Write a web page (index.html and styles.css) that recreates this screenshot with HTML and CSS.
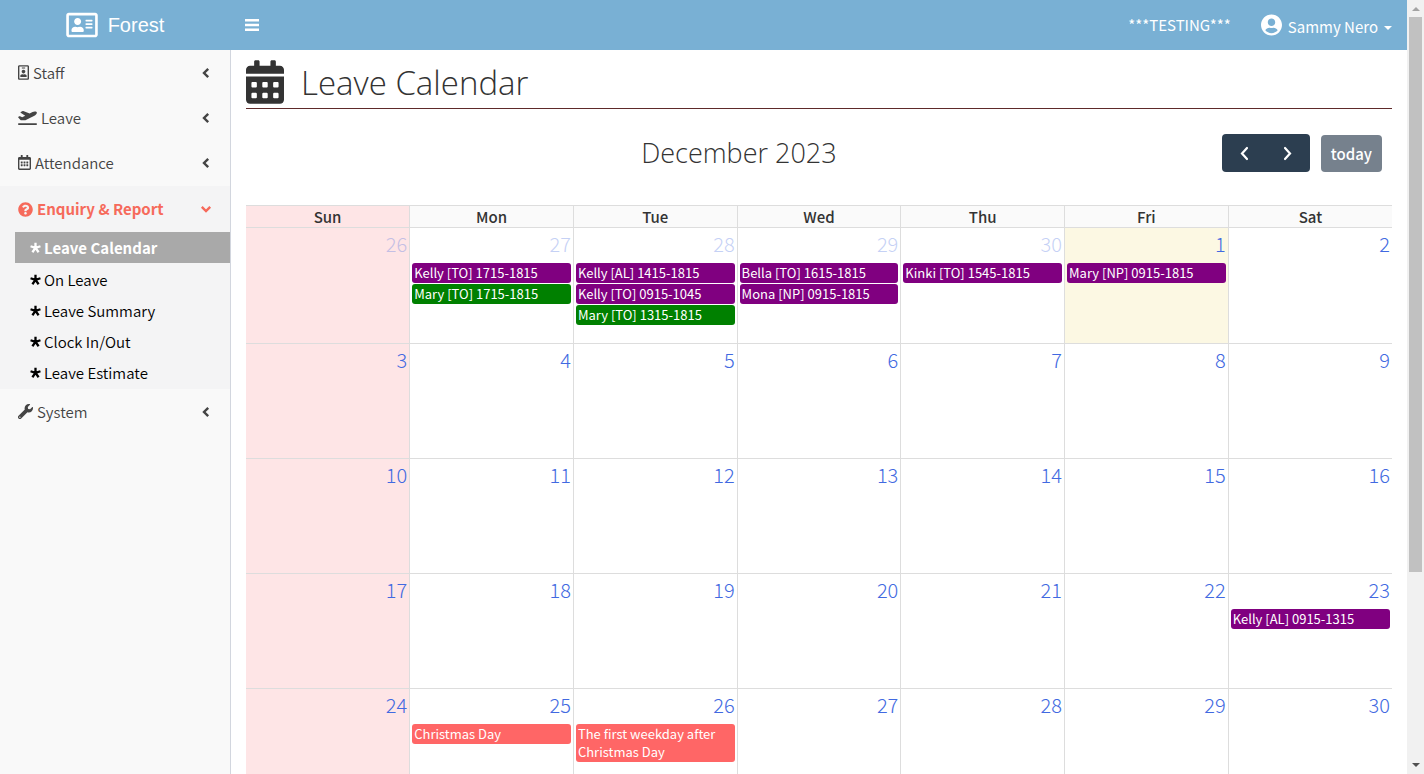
FILE: index.html
```html
<!DOCTYPE html>
<html lang="en">
<head>
    <meta charset="UTF-8">
    <meta name="viewport" content="width=device-width, initial-scale=1.0">
    <title>Leave Calendar</title>
    <link rel="stylesheet" href="styles.css">
</head>
<body>
    <!-- Shared icons -->
    <svg class="icon-defs" aria-hidden="true">
        <symbol id="angle-left" viewBox="0 0 8 12"><path d="M6.200 1.800L2 6l4.200 4.200" fill="none" stroke="currentColor" stroke-width="2.400"/></symbol>
        <symbol id="star" viewBox="0 0 12 12"><path d="M6 6.400V.8M6 6.400L.6 4.600M6 6.400l5.400-1.800M6 6.400l-3.400 4.800M6 6.400l3.400 4.800" fill="none" stroke="currentColor" stroke-width="2.500"/></symbol>
    </svg>

    <div class="page">
        <div class="app">
            <header class="navbar">
                <a href="#" class="brand">
                    <svg class="brand-icon" viewBox="0 0 576 512"><path fill="currentColor" d="M528 32H48C21.500 32 0 53.500 0 80v352c0 26.500 21.500 48 48 48h480c26.500 0 48-21.500 48-48V80c0-26.500-21.500-48-48-48zm0 400H48V80h480v352zM208 256c35.300 0 64-28.700 64-64s-28.700-64-64-64-64 28.700-64 64 28.700 64 64 64zm-89.600 128h179.200c12.400 0 22.400-8.600 22.400-19.200v-19.200c0-31.800-30.100-57.600-67.200-57.600-10.800 0-18.700 8-44.800 8-26.900 0-33.400-8-44.800-8-37.100 0-67.200 25.800-67.200 57.600v19.200c0 10.600 10 19.200 22.400 19.200zM360 320h112c4.400 0 8-3.600 8-8v-16c0-4.400-3.600-8-8-8H360c-4.400 0-8 3.600-8 8v16c0 4.400 3.600 8 8 8zm0-64h112c4.400 0 8-3.600 8-8v-16c0-4.400-3.600-8-8-8H360c-4.400 0-8 3.600-8 8v16c0 4.400 3.600 8 8 8zm0-64h112c4.400 0 8-3.600 8-8v-16c0-4.400-3.600-8-8-8H360c-4.400 0-8 3.600-8 8v16c0 4.400 3.600 8 8 8z"/></svg>
                    <span>Forest</span>
                </a>
                <button type="button" class="sidebar-toggle" aria-label="Toggle navigation">
                    <svg viewBox="0 0 14 12"><path fill="currentColor" d="M0 0h14v2.400H0zM0 4.800h14v2.400H0zM0 9.600h14v2.400H0z"/></svg>
                </button>
                <span class="env-label">***TESTING***</span>
                <button type="button" class="user-menu">
                    <svg class="user-icon" viewBox="0 0 496 512"><path fill="currentColor" d="M248 8C111 8 0 119 0 256s111 248 248 248 248-111 248-248S385 8 248 8zm0 96c48.600 0 88 39.400 88 88s-39.400 88-88 88-88-39.400-88-88 39.400-88 88-88zm0 344c-58.700 0-111.300-26.600-146.500-68.200 18.800-35.400 55.600-59.800 98.500-59.800 2.400 0 4.800.4 7.100 1.100 13 4.200 26.600 6.900 40.900 6.900 14.300 0 28-2.700 40.900-6.900 2.300-.7 4.700-1.100 7.100-1.100 42.900 0 79.700 24.400 98.500 59.800C359.300 421.400 306.700 448 248 448z"/></svg>
                    <span class="user-name">Sammy Nero</span>
                    <span class="caret"></span>
                </button>
            </header>

            <div class="body">
                <nav class="sidebar">
                    <ul class="menu">
                        <li>
                            <a href="#" class="menu-link">
                                <svg class="icon-badge" viewBox="0 0 384 512"><path fill="currentColor" d="M336 0H48C21.500 0 0 21.500 0 48v416c0 26.500 21.500 48 48 48h288c26.500 0 48-21.500 48-48V48c0-26.500-21.500-48-48-48zm0 464H48V48h288v416zM144 112h96c8.800 0 16-7.200 16-16s-7.200-16-16-16h-96c-8.800 0-16 7.200-16 16s7.200 16 16 16zm48 176c35.300 0 64-28.700 64-64s-28.700-64-64-64-64 28.700-64 64 28.700 64 64 64zm-89.600 128h179.200c12.400 0 22.400-8.600 22.400-19.200v-19.200c0-31.800-30.100-57.600-67.200-57.600-10.800 0-18.700 8-44.800 8-26.900 0-33.400-8-44.800-8-37.100 0-67.200 25.800-67.200 57.600v19.200c0 10.600 10 19.200 22.400 19.200z"/></svg>
                                <span>Staff</span>
                                <svg class="arrow"><use href="#angle-left"/></svg>
                            </a>
                        </li>
                        <li>
                            <a href="#" class="menu-link">
                                <svg class="icon-plane" viewBox="0 0 640 512"><path fill="currentColor" d="M624 448H16c-8.840 0-16 7.160-16 16v32c0 8.840 7.160 16 16 16h608c8.840 0 16-7.160 16-16v-32c0-8.840-7.160-16-16-16zM80.550 341.270c6.280 6.840 15.100 10.720 24.330 10.710l130.540-.18a65.620 65.620 0 0 0 29.640-7.120l290.960-147.650c26.740-13.570 50.710-32.940 67.020-58.310 18.310-28.480 20.300-49.090 13.070-63.650-7.210-14.570-24.740-25.270-58.250-27.450-29.850-1.940-59.540 5.920-86.280 19.480l-98.510 49.990-218.700-82.060a17.800 17.800 0 0 0-18-1.110L90.620 67.290c-10.670 5.410-13.250 19.650-5.170 28.530l156.220 98.100-103.210 52.380-72.350-36.470a17.800 17.800 0 0 0-16.070.02L9.910 230.220c-10.440 5.300-13.190 19.120-5.570 28.080l76.210 82.970z"/></svg>
                                <span>Leave</span>
                                <svg class="arrow"><use href="#angle-left"/></svg>
                            </a>
                        </li>
                        <li>
                            <a href="#" class="menu-link">
                                <svg class="icon-calendar" viewBox="0 0 448 512"><path fill="currentColor" d="M148 288h-40c-6.600 0-12-5.400-12-12v-40c0-6.600 5.400-12 12-12h40c6.600 0 12 5.400 12 12v40c0 6.600-5.400 12-12 12zm108-12v-40c0-6.600-5.400-12-12-12h-40c-6.600 0-12 5.400-12 12v40c0 6.600 5.400 12 12 12h40c6.600 0 12-5.400 12-12zm96 0v-40c0-6.600-5.400-12-12-12h-40c-6.600 0-12 5.400-12 12v40c0 6.600 5.400 12 12 12h40c6.600 0 12-5.400 12-12zm-96 96v-40c0-6.600-5.400-12-12-12h-40c-6.600 0-12 5.400-12 12v40c0 6.600 5.400 12 12 12h40c6.600 0 12-5.400 12-12zm-96 0v-40c0-6.600-5.400-12-12-12h-40c-6.600 0-12 5.400-12 12v40c0 6.600 5.400 12 12 12h40c6.600 0 12-5.400 12-12zm192 0v-40c0-6.600-5.400-12-12-12h-40c-6.600 0-12 5.400-12 12v40c0 6.600 5.400 12 12 12h40c6.600 0 12-5.400 12-12zm96-260v352c0 26.500-21.500 48-48 48H48c-26.500 0-48-21.500-48-48V112c0-26.500 21.500-48 48-48h48V12c0-6.600 5.400-12 12-12h40c6.600 0 12 5.400 12 12v52h128V12c0-6.600 5.400-12 12-12h40c6.600 0 12 5.400 12 12v52h48c26.500 0 48 21.500 48 48zm-48 346V160H48v298c0 3.300 2.700 6 6 6h340c3.300 0 6-2.700 6-6z"/></svg>
                                <span>Attendance</span>
                                <svg class="arrow"><use href="#angle-left"/></svg>
                            </a>
                        </li>
                        <li class="open">
                            <a href="#" class="menu-link">
                                <svg class="icon-question" viewBox="0 0 512 512"><path fill="currentColor" d="M504 256c0 137-111 248-248 248S8 393 8 256C8 119 119 8 256 8s248 111 248 248zM262.700 90c-54.500 0-89.300 23-116.600 63.800-3.500 5.300-2.400 12.400 2.700 16.200l34.700 26.300c5.200 4 12.600 3 16.700-2.100 17.900-22.700 30.100-35.800 57.300-35.800 20.400 0 45.700 13.100 45.700 33 0 15-12.400 22.700-32.500 34C247.100 238.500 216 254.900 216 296v4c0 6.600 5.400 12 12 12h56c6.600 0 12-5.400 12-12v-1.300c0-28.500 83.200-29.700 83.200-106.700 0-58-60.200-102-116.500-102zM256 338c-25.400 0-46 20.600-46 46 0 25.400 20.600 46 46 46s46-20.600 46-46c0-25.400-20.600-46-46-46z"/></svg>
                                <span>Enquiry &amp; Report</span>
                                <svg class="arrow arrow-down"><use href="#angle-left"/></svg>
                            </a>
                            <ul class="submenu">
                                <li><a href="#" class="submenu-link active"><svg class="icon-star"><use href="#star"/></svg>Leave Calendar</a></li>
                                <li><a href="#" class="submenu-link"><svg class="icon-star"><use href="#star"/></svg>On Leave</a></li>
                                <li><a href="#" class="submenu-link"><svg class="icon-star"><use href="#star"/></svg>Leave Summary</a></li>
                                <li><a href="#" class="submenu-link"><svg class="icon-star"><use href="#star"/></svg>Clock In/Out</a></li>
                                <li><a href="#" class="submenu-link"><svg class="icon-star"><use href="#star"/></svg>Leave Estimate</a></li>
                            </ul>
                        </li>
                        <li>
                            <a href="#" class="menu-link">
                                <svg class="icon-wrench" viewBox="0 0 512 512"><path fill="currentColor" d="M507.730 109.100c-2.240-9.030-13.540-12.090-20.120-5.510l-74.360 74.360-67.880-11.310-11.310-67.880 74.360-74.360c6.620-6.620 3.430-17.900-5.660-20.160-47.380-11.740-99.550.91-136.580 37.930-39.640 39.640-50.550 97.100-34.050 147.200L18.740 402.760c-24.990 24.990-24.990 65.510 0 90.500 24.990 24.990 65.510 24.990 90.500 0l213.210-213.210c50.120 16.710 107.470 5.680 147.370-34.220 37.070-37.070 49.700-89.320 37.910-136.730zM64 472c-13.250 0-24-10.750-24-24 0-13.260 10.750-24 24-24s24 10.740 24 24c0 13.250-10.750 24-24 24z"/></svg>
                                <span>System</span>
                                <svg class="arrow"><use href="#angle-left"/></svg>
                            </a>
                        </li>
                    </ul>
                </nav>

                <main class="content">
                    <div class="page-header">
                        <svg class="page-icon" viewBox="0 0 448 512"><path fill="currentColor" fill-rule="evenodd" d="M0 464c0 26.500 21.500 48 48 48h352c26.500 0 48-21.500 48-48V192H0v272zM76 256h40q12 0 12 12v40q0 12-12 12H76q-12 0-12-12v-40q0-12 12-12zm128 0h40q12 0 12 12v40q0 12-12 12h-40q-12 0-12-12v-40q0-12 12-12zm128 0h40q12 0 12 12v40q0 12-12 12h-40q-12 0-12-12v-40q0-12 12-12zM76 384h40q12 0 12 12v40q0 12-12 12H76q-12 0-12-12v-40q0-12 12-12zm128 0h40q12 0 12 12v40q0 12-12 12h-40q-12 0-12-12v-40q0-12 12-12zm128 0h40q12 0 12 12v40q0 12-12 12h-40q-12 0-12-12v-40q0-12 12-12zM400 64h-48V16c0-8.800-7.200-16-16-16h-32c-8.800 0-16 7.200-16 16v48H160V16c0-8.800-7.200-16-16-16h-32c-8.800 0-16 7.200-16 16v48H48C21.500 64 0 85.500 0 112v48h448v-48c0-26.500-21.500-48-48-48z"/></svg>
                        <h1>Leave Calendar</h1>
                    </div>

                    <div class="toolbar">
                        <div></div>
                        <h2>December 2023</h2>
                        <div class="toolbar-buttons">
                            <div class="btn-group">
                                <button type="button" class="btn-nav" aria-label="Previous month"><svg viewBox="0 0 10 16"><path d="M8 3L3 8.500 8 14" fill="none" stroke="currentColor" stroke-width="2.200" stroke-linecap="round"/></svg></button>
                                <button type="button" class="btn-nav" aria-label="Next month"><svg viewBox="0 0 10 16"><path d="M2 3l5 5.500L2 14" fill="none" stroke="currentColor" stroke-width="2.200" stroke-linecap="round"/></svg></button>
                            </div>
                            <button type="button" class="btn-today">today</button>
                        </div>
                    </div>

                    <table class="calendar">
                        <thead>
                            <tr>
                                <th>Sun</th>
                                <th>Mon</th>
                                <th>Tue</th>
                                <th>Wed</th>
                                <th>Thu</th>
                                <th>Fri</th>
                                <th>Sat</th>
                            </tr>
                        </thead>
                        <tbody>
                            <tr>
                                <td class="other"><a href="#" class="day">26</a></td>
                                <td class="other">
                                    <a href="#" class="day">27</a>
                                    <a href="#" class="event purple">Kelly [TO] 1715-1815</a>
                                    <a href="#" class="event green">Mary [TO] 1715-1815</a>
                                </td>
                                <td class="other">
                                    <a href="#" class="day">28</a>
                                    <a href="#" class="event purple">Kelly [AL] 1415-1815</a>
                                    <a href="#" class="event purple">Kelly [TO] 0915-1045</a>
                                    <a href="#" class="event green">Mary [TO] 1315-1815</a>
                                </td>
                                <td class="other">
                                    <a href="#" class="day">29</a>
                                    <a href="#" class="event purple">Bella [TO] 1615-1815</a>
                                    <a href="#" class="event purple">Mona [NP] 0915-1815</a>
                                </td>
                                <td class="other">
                                    <a href="#" class="day">30</a>
                                    <a href="#" class="event purple">Kinki [TO] 1545-1815</a>
                                </td>
                                <td class="today">
                                    <a href="#" class="day">1</a>
                                    <a href="#" class="event purple">Mary [NP] 0915-1815</a>
                                </td>
                                <td><a href="#" class="day">2</a></td>
                            </tr>
                            <tr>
                                <td><a href="#" class="day">3</a></td>
                                <td><a href="#" class="day">4</a></td>
                                <td><a href="#" class="day">5</a></td>
                                <td><a href="#" class="day">6</a></td>
                                <td><a href="#" class="day">7</a></td>
                                <td><a href="#" class="day">8</a></td>
                                <td><a href="#" class="day">9</a></td>
                            </tr>
                            <tr>
                                <td><a href="#" class="day">10</a></td>
                                <td><a href="#" class="day">11</a></td>
                                <td><a href="#" class="day">12</a></td>
                                <td><a href="#" class="day">13</a></td>
                                <td><a href="#" class="day">14</a></td>
                                <td><a href="#" class="day">15</a></td>
                                <td><a href="#" class="day">16</a></td>
                            </tr>
                            <tr>
                                <td><a href="#" class="day">17</a></td>
                                <td><a href="#" class="day">18</a></td>
                                <td><a href="#" class="day">19</a></td>
                                <td><a href="#" class="day">20</a></td>
                                <td><a href="#" class="day">21</a></td>
                                <td><a href="#" class="day">22</a></td>
                                <td>
                                    <a href="#" class="day">23</a>
                                    <a href="#" class="event purple">Kelly [AL] 0915-1315</a>
                                </td>
                            </tr>
                            <tr>
                                <td><a href="#" class="day">24</a></td>
                                <td>
                                    <a href="#" class="day">25</a>
                                    <a href="#" class="event holiday">Christmas Day</a>
                                </td>
                                <td>
                                    <a href="#" class="day">26</a>
                                    <a href="#" class="event holiday">The first weekday after Christmas Day</a>
                                </td>
                                <td><a href="#" class="day">27</a></td>
                                <td><a href="#" class="day">28</a></td>
                                <td><a href="#" class="day">29</a></td>
                                <td><a href="#" class="day">30</a></td>
                            </tr>
                        </tbody>
                    </table>
                </main>
            </div>
        </div>

        <!-- Page scrollbar -->
        <div class="scrollbar" aria-hidden="true">
            <span class="scroll-up"></span>
            <div class="scroll-track"><div class="scroll-thumb"></div></div>
            <span class="scroll-down"></span>
        </div>
    </div>
</body>
</html>
```

FILE: styles.css
```css
* {
    box-sizing: border-box;
}
body {
    margin: 0;
    font-family: "Noto Sans CJK TC", "Noto Sans", sans-serif;
    font-size: 15px;
    line-height: 20px;
    color: #333;
    background-color: #fff;
}
a {
    color: inherit;
    text-decoration: none;
}
button {
    font: inherit;
    border: none;
    cursor: pointer;
}
ul {
    list-style: none;
    margin: 0;
    padding: 0;
}
svg {
    display: block;
    flex: none;
}
.icon-defs {
    display: none;
}
.page {
    display: flex;
    height: 100vh;
    overflow: hidden;
}
.app {
    flex: 1;
    min-width: 0;
    display: flex;
    flex-direction: column;
}

/* Top bar */
.navbar {
    display: flex;
    align-items: center;
    flex: none;
    height: 50px;
    padding-right: 15px;
    background-color: #79b0d4;
    color: #fff;
}
.brand {
    display: flex;
    align-items: center;
    justify-content: center;
    gap: 10px;
    width: 230px;
    font-family: "Liberation Sans", Arial, sans-serif;
    font-size: 20px;
}
.brand-icon {
    width: 32px;
    height: 28px;
}
.sidebar-toggle {
    padding: 15px;
    background: none;
    color: #fff;
}
.sidebar-toggle svg {
    width: 14px;
    height: 12px;
}
.env-label {
    margin-left: auto;
    margin-right: 30px;
}
.user-menu {
    display: flex;
    align-items: center;
    padding: 0;
    background: none;
    color: #fff;
}
.user-icon {
    width: 21px;
    height: 22px;
    margin-right: 6px;
}
.user-name {
    padding-top: 4px;
}
.caret {
    margin-left: 6px;
    margin-top: 6px;
    border: 4px solid transparent;
    border-top-color: #fff;
    border-bottom: none;
}

/* Sidebar */
.body {
    flex: 1;
    min-height: 0;
    display: flex;
}
.sidebar {
    flex: none;
    width: 231px;
    background-color: #f9f9f9;
    border-right: 1px solid #d2d6de;
    font-weight: 350;
}
.menu-link {
    display: flex;
    align-items: center;
    gap: 4px;
    height: 45px;
    padding: 0 20px 0 18px;
    color: #444;
}
.arrow {
    width: 8px;
    height: 12px;
    margin-left: auto;
}
.arrow-down {
    transform: rotate(-90deg);
}
.icon-badge {
    width: 11px;
    height: 15px;
}
.icon-plane {
    width: 19px;
    height: 15px;
}
.icon-calendar {
    width: 13px;
    height: 15px;
}
.icon-question,
.icon-wrench {
    width: 15px;
    height: 15px;
}
.open {
    margin-top: 1px;
    padding-bottom: 1px;
    background-color: #f4f4f5;
}
.open > .menu-link {
    height: 46px;
    color: #f66a5b;
    font-weight: 700;
}
.submenu {
    padding-left: 15px;
}
.submenu-link {
    display: flex;
    align-items: center;
    gap: 3px;
    height: 31px;
    padding-left: 15px;
    color: #000;
}
.submenu-link.active {
    margin-bottom: 1px;
    background-color: #a9a9a9;
    color: #fff;
    font-weight: 700;
}
.icon-star {
    width: 11px;
    height: 11px;
}

/* Content */
.content {
    flex: 1;
    min-width: 0;
    padding: 10px 15px 0;
    overflow: hidden;
}
.page-header {
    display: flex;
    align-items: flex-start;
    gap: 17px;
    height: 49px;
    border-bottom: 1px solid #5e2a2a;
}
.page-icon {
    width: 38px;
    height: 44px;
}
h1,
h2 {
    margin: 0;
    font-family: "Open Sans", "Noto Sans", sans-serif;
    font-weight: 300;
}
h1 {
    font-size: 33px;
    line-height: 46px;
}
h2 {
    font-size: 27px;
    line-height: 38px;
}
.toolbar {
    display: flex;
    justify-content: space-between;
    align-items: center;
    margin: 25px 10px 33px;
}
.toolbar-buttons {
    display: flex;
    gap: 11px;
    align-items: flex-end;
}
.btn-group {
    display: flex;
    border-radius: 4px;
    overflow: hidden;
}
.btn-nav {
    padding: 11px 17px;
    background-color: #2c3e50;
    color: #fff;
}
.btn-nav svg {
    width: 10px;
    height: 16px;
}
.btn-today {
    height: 37px;
    padding: 0 10px;
    border-radius: 4px;
    background-color: #76818d;
    color: #fff;
    font-weight: 500;
}

/* Calendar */
.calendar {
    width: 100%;
    table-layout: fixed;
    border-collapse: collapse;
}
.calendar th,
.calendar td {
    border: 1px solid #ddd;
}
.calendar th {
    height: 22px;
    padding: 0;
    background-color: #fafafa;
    font-weight: 500;
    line-height: 20px;
}
.calendar th:first-child,
.calendar td:first-child {
    border-left: none;
    background-color: #fee5e6;
}
.calendar th:last-child,
.calendar td:last-child {
    border-right: none;
}
.calendar td {
    height: 115px;
    padding: 0 2px;
    vertical-align: top;
}
.calendar tbody tr:first-child td {
    height: 116px;
}
.calendar .today {
    background-color: #fcf8e3;
}
.day {
    display: block;
    height: 35px;
    text-align: right;
    font-size: 20px;
    line-height: 32px;
    font-weight: 300;
    color: #4169e1;
}
.other .day {
    opacity: 0.3;
}
.event {
    display: block;
    margin-bottom: 1px;
    padding: 1px 2px;
    border-radius: 3px;
    color: #fff;
    font-size: 13px;
    line-height: 18px;
}
.purple {
    background-color: #800080;
}
.green {
    background-color: #008000;
}
.holiday {
    background-color: #f66;
}

/* Scrollbar */
.scrollbar {
    display: flex;
    flex-direction: column;
    align-items: center;
    flex: none;
    width: 17px;
    background-color: #f1f1f1;
}
.scroll-up,
.scroll-down {
    border: 4px solid transparent;
}
.scroll-up {
    margin: 7px 0 6px;
    border-top: none;
    border-bottom-color: #a3a3a3;
}
.scroll-down {
    margin: 6px 0 7px;
    border-bottom: none;
    border-top-color: #505050;
}
.scroll-track {
    flex: 1;
}
.scroll-thumb {
    width: 13px;
    height: 75%;
    background-color: #c1c1c1;
}
```
